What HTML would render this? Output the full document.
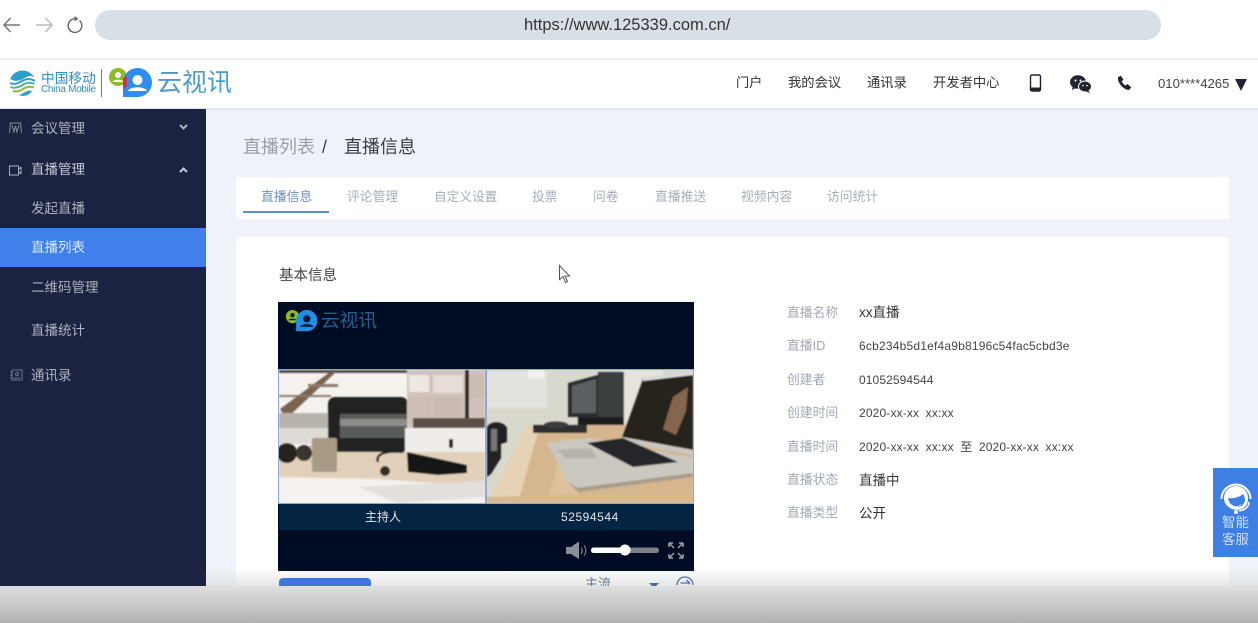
<!DOCTYPE html>
<html lang="zh-CN"><head><meta charset="utf-8"><title>直播信息</title>
<style>
html,body{margin:0;padding:0;width:1258px;height:623px;overflow:hidden;background:#fff}
body{position:relative;font-family:"Liberation Sans","Noto Sans CJK SC",sans-serif;color:#333}
.a{position:absolute;white-space:nowrap;line-height:1}
.b{position:absolute}
svg{position:absolute;overflow:visible}
.side{color:#aeb3c1;font-size:13.5px}
.tab{color:#a9adb6;font-size:12.8px;top:191px}
.lab{color:#a3a7b0;font-size:12.8px;left:787px}
.val{color:#444;font-size:12px;left:859px}
.dt{font-size:12px;letter-spacing:.15px;word-spacing:3px}
.big{font-size:13.5px;color:#333}
</style></head><body>
<!-- browser bar -->
<svg style="left:0;top:0" width="100" height="50" fill="none">
<path d="M20 25H4M10.500 18 4 25l6.500 7" stroke="#777" stroke-width="1.500"/>
<path d="M36 25h16M45.500 18l6.500 7-6.500 7" stroke="#bbb" stroke-width="1.500"/>
<path d="M79.500 20.500a6.800 6.800 0 1 1-4.500-1.700" stroke="#666" stroke-width="1.400"/><path d="M74.500 16v5.500l4-2.800z" fill="#666"/>
</svg>
<div class="b" style="left:95px;top:10px;width:1066px;height:30px;border-radius:15px;background:#d9dfe7"></div>
<div class="a" style="left:524px;top:17px;font-size:16.5px;color:#333">https://www.125339.com.cn/</div>
<div class="b" style="left:0;top:58px;width:1258px;height:2px;background:#eceef1"></div>
<!-- header -->
<div class="b" style="left:0;top:60px;width:1258px;height:48px;background:#fff"></div>
<svg style="left:9px;top:69px" width="28" height="28" viewBox="0 0 28 28" fill="none">
<path d="M13.500 1.500c5 0 9 2.500 12 7-3-2-6-2-9 0-4 2.500-8 4-12 3-2-1-3-1.500-3.500-1 1.500-5 6.500-9 12.500-9z" fill="#2f9ec9"/>
<path d="M1 14c3 1.500 7 1 11-1.500 5-3 10-3 14-.500" stroke="#2f9ec9" stroke-width="2"/>
<path d="M1.500 18c4 1.500 8 .500 12-2 4-2.500 8-3 12-1" stroke="#4fb3a0" stroke-width="2"/>
<path d="M4 22c4 1 7 0 10-2 4-2.500 7-3 11-1.500" stroke="#8fc03e" stroke-width="2.200"/>
<path d="M9 26c3 0 5-2 8-3.500 2-1 4-1 6-.5-2 3-5 5-9.500 5z" fill="#2f9ec9"/>
</svg>
<div class="a" style="left:41px;top:72px;font-size:13.700px;color:#2f8cbc">中国移动</div>
<div class="a" style="left:41px;top:85px;font-size:10px;color:#2f8cbc;letter-spacing:-.3px">China Mobile</div>
<div class="b" style="left:101px;top:69px;width:1px;height:28px;background:#2f8cbc"></div>
<svg style="left:109px;top:68px" width="44" height="30" viewBox="0 0 44 30">
<circle cx="9" cy="9" r="9" fill="#8dbb22"/><circle cx="9" cy="7" r="3" fill="#fff"/><path d="M3.500 14c1-3 10-3 11-0z" fill="#fff"/>
<path d="M14 29V15A14.500 14.500 0 1 1 29 29z" fill="#2d8ef0"/><path d="M14 10l4-2v10l-4 4z" fill="#c9315e"/>
<circle cx="28.500" cy="12" r="5" fill="#fff"/><path d="M19 23c2-5 17-5 19 0z" fill="#fff"/>
</svg>
<div class="a" style="left:157px;top:71px;font-size:25px;color:#4a9ccb">云视讯</div>
<div class="a" style="left:736px;top:76px;font-size:13.200px;color:#333">门户</div>
<div class="a" style="left:788px;top:76px;font-size:13.300px;color:#333">我的会议</div>
<div class="a" style="left:867px;top:76px;font-size:13.300px;color:#333">通讯录</div>
<div class="a" style="left:933px;top:76px;font-size:13.300px;color:#333">开发者中心</div>
<svg style="left:1029px;top:74px" width="13" height="18" viewBox="0 0 13 18" fill="none"><rect x="1.500" y="1" width="10" height="16" rx="1.500" stroke="#222433" stroke-width="1.400"/><rect x="1.500" y="13.500" width="10" height="3.500" fill="#222433"/></svg>
<svg style="left:1070px;top:75px" width="22" height="19" viewBox="0 0 22 19"><ellipse cx="8" cy="7" rx="8" ry="6.800" fill="#222433"/><path d="M3 11l-1 4 4-2z" fill="#222433"/><ellipse cx="15" cy="11.500" rx="6.500" ry="5.500" fill="#222433" stroke="#fff"/><path d="M18 15l2 3-4-1.500z" fill="#222433"/><circle cx="5.500" cy="5.500" r="1" fill="#fff"/><circle cx="10.500" cy="5.500" r="1" fill="#fff"/><circle cx="13" cy="10.500" r=".8" fill="#fff"/><circle cx="17" cy="10.500" r=".8" fill="#fff"/></svg>
<svg style="left:1117px;top:75px" width="15" height="16" viewBox="0 0 15 16"><path d="M1 2.500 3.500 .5l3 4-1.700 2c.7 1.800 2 3.200 3.800 4l1.900-1.500 3.800 3.200-2 2.500C8 16 0 8 1 2.500z" fill="#222433"/></svg>
<div class="a" style="left:1158px;top:77px;font-size:13.100px;color:#444">010****4265</div>
<svg style="left:1235px;top:79px" width="12" height="12"><path d="M0 0h12L6 12z" fill="#222433"/></svg>
<div class="b" style="left:0;top:108px;width:1258px;height:2px;background:#e3e6ee"></div>
<!-- main background -->
<div class="b" style="left:206px;top:110px;width:1052px;height:476px;background:#eff2f8"></div>
<!-- sidebar -->
<div class="b" style="left:0;top:109px;width:206px;height:477px;background:#1b2340"></div>
<div class="b" style="left:0;top:228px;width:206px;height:39px;background:#3f80ea"></div>
<svg style="left:9px;top:122px" width="13" height="12" viewBox="0 0 13 12" fill="none" stroke="#858b9e"><path d="M.500 1h12M1.500 1 .500 11M11.500 1l1 10M3 3 5 10 6.500 4 8 10l2-7"/></svg>
<div class="a side" style="left:31px;top:122px">会议管理</div>
<svg style="left:179px;top:124px" width="9" height="6" fill="none" stroke="#aeb3c1" stroke-width="2"><path d="M1 1l3.500 3.500L8 1"/></svg>
<svg style="left:9px;top:165px" width="14" height="11" fill="none" stroke="#aeb3c1"><rect x=".5" y="1" width="9" height="9"/><path d="M12 2v7M10 4l2-2M10 7l2 2"/></svg>
<div class="a side" style="left:31px;top:163px;color:#c6cad6">直播管理</div>
<svg style="left:179px;top:167px" width="9" height="6" fill="none" stroke="#c6cad6" stroke-width="2"><path d="M1 5l3.500-3.500L8 5"/></svg>
<div class="a side" style="left:31px;top:202px">发起直播</div>
<div class="a side" style="left:31px;top:241px;color:#dfe8fb">直播列表</div>
<div class="a side" style="left:31px;top:281px">二维码管理</div>
<div class="a side" style="left:31px;top:324px">直播统计</div>
<svg style="left:10px;top:369px" width="13" height="12" fill="none" stroke="#6f7587"><rect x="2" y="1" width="10" height="10"/><circle cx="7" cy="5" r="1.500"/><path d="M4 9h6M0 3h3M0 6h3M0 9h3"/></svg>
<div class="a side" style="left:31px;top:369px">通讯录</div>
<!-- breadcrumb -->
<div class="a" style="left:243px;top:138px;font-size:18px;color:#9a9ea8">直播列表</div>
<div class="a" style="left:322px;top:138px;font-size:18px;color:#444">/</div>
<div class="a" style="left:344px;top:138px;font-size:18px;color:#3a3c42">直播信息</div>
<!-- tabs -->
<div class="b" style="left:236px;top:177px;width:993px;height:42px;background:#fff;border-radius:2px"></div>
<div class="a tab" style="left:261px;color:#6c8fc2">直播信息</div>
<div class="a tab" style="left:347px">评论管理</div>
<div class="a tab" style="left:434px;font-size:12.700px">自定义设置</div>
<div class="a tab" style="left:532px">投票</div>
<div class="a tab" style="left:593px">问卷</div>
<div class="a tab" style="left:655px">直播推送</div>
<div class="a tab" style="left:741px">视频内容</div>
<div class="a tab" style="left:827px">访问统计</div>
<div class="b" style="left:243px;top:211px;width:86px;height:2px;background:#5f8bd0"></div>
<!-- card -->
<div class="b" style="left:236px;top:237px;width:993px;height:349px;background:#fff;border-radius:4px 4px 0 0"></div>
<!-- bottom fade over page, beneath video -->
<div class="b" style="left:206px;top:568px;width:1052px;height:18px;background:linear-gradient(rgba(222,222,222,0),rgba(222,222,222,.75))"></div>
<div class="a" style="left:279px;top:269px;font-size:14.500px;color:#444">基本信息</div>
<svg style="left:559px;top:265px" width="13" height="19" viewBox="0 0 13 19"><path d="M.5.5v14l3.500-3 2.500 6 2-1-2.500-5.500h4.500z" fill="#fff" stroke="#555"/></svg>
<!-- video -->
<div class="b" style="left:278px;top:302px;width:416px;height:269px;background:#000b24"></div>
<svg style="left:285px;top:310px" width="34" height="22" viewBox="0 0 44 30">
<circle cx="9" cy="9" r="9" fill="#8dbb22"/><circle cx="9" cy="7" r="3" fill="#14203a"/><path d="M3.500 14c1-3 10-3 11 0z" fill="#14203a"/>
<path d="M14 29V15A14.500 14.500 0 1 1 29 29z" fill="#1f8fe6"/><circle cx="28.500" cy="12" r="5" fill="#0b1b33"/><path d="M19 23c2-5 17-5 19 0z" fill="#0b1b33"/>
</svg>
<div class="a" style="left:321px;top:312px;font-size:18.700px;color:#24608f">云视讯</div>
<svg style="left:278px;top:369px" width="416" height="135" viewBox="0 0 416 135">
<defs><filter id="s"><feGaussianBlur stdDeviation=".7"/></filter><clipPath id="l"><rect x="1" y="1" width="206" height="133"/></clipPath><clipPath id="r"><rect x="209" y="1" width="206" height="133"/></clipPath></defs>
<rect width="416" height="135" fill="#8fa9d4"/>
<g clip-path="url(#l)"><rect x="1" y="1" width="206" height="133" fill="#f5f2ee"/>
<g filter="url(#s)">
<rect x="1" y="1" width="129" height="3" fill="#5c5048"/>
<path d="M2 40 52 3h6L8 50z" fill="#7b6350"/><path d="M30 15h30v3H30zM1 26h52v2H1z" fill="#8a7a6c"/><rect x="1" y="44" width="50" height="15" fill="#b9b3ad"/><rect x="1" y="59" width="50" height="16" fill="#dedad6"/>
<rect x="50" y="28" width="80" height="56" rx="7" fill="#232324"/><rect x="62" y="45" width="68" height="24" fill="#5a5b5b"/><rect x="62" y="50" width="68" height="7" fill="#8d8c8a"/>
<rect x="129" y="1" width="78" height="58" fill="#d0c2ba"/><rect x="131" y="6" width="20" height="17" fill="#efe8e2"/><rect x="155" y="6" width="30" height="18" fill="#e6ddd6"/><rect x="192" y="6" width="15" height="22" fill="#cbbdb4"/><rect x="131" y="28" width="22" height="20" fill="#cdbfb6"/><rect x="155" y="28" width="30" height="20" fill="#cabbb2"/><rect x="187" y="1" width="4" height="52" fill="#2d2724"/><rect x="135" y="49" width="72" height="10" fill="#5c5047"/>
<path d="M127 59h80v34l-80-10z" fill="#efecea"/><rect x="171" y="70" width="4" height="9" rx="1" fill="#222"/>
<path d="M1 83h206v51H1z" fill="#e2d0ba"/><path d="M1 108 100 110 207 118V134H1z" fill="#f5f1ed"/><path d="M80 118 207 112V128L120 134z" fill="#e3dfdb"/>
<rect x="34" y="69" width="25" height="34" rx="2" fill="#a89a85"/><path d="M34 77c-5 1-6 13 0 16" fill="none" stroke="#c9bba4" stroke-width="2"/>
<circle cx="9" cy="84" r="10" fill="#26241f"/><circle cx="26" cy="84" r="8" fill="#3a362f"/>
<path d="M129 83 189 96V104L160 106 130 103z" fill="#131313"/><path d="M100 93c-3-8 8-12 25-10" fill="none" stroke="#222" stroke-width="2.500"/><circle cx="107" cy="102" r="5" fill="#332d2a"/>
</g></g>
<g clip-path="url(#r)"><rect x="209" y="1" width="206" height="133" fill="#d9d8cc"/>
<g filter="url(#s)">
<rect x="209" y="2" width="60" height="37" fill="#e2e3dc"/><rect x="250" y="1" width="16" height="8" fill="#f2f1ec"/><rect x="345" y="1" width="40" height="60" fill="#e6e4d9"/>
<path d="M290 14 320 6V48H290z" fill="#2b2d30"/><path d="M294 17 318 10V44H294z" fill="#5d6064"/><rect x="320" y="3" width="26" height="46" fill="#3d3f41"/><rect x="300" y="48" width="46" height="8" fill="#1f1f1f"/>
<path d="M209 134 249 56H415V134z" fill="#d6b68e"/><path d="M209 134 249 56 262 56 240 134z" fill="#e6d2b4"/><path d="M270 134 285 70H300L300 134z" fill="#dfc29b"/><path d="M209 134V128L415 122V134z" fill="#d9b78f"/>
<rect x="255" y="56" width="54" height="8" fill="#2f2f2f"/><ellipse cx="278" cy="56" rx="12" ry="3.500" fill="#3a3a3a"/>
<path d="M209 58c4-7 17-6 20 1v14l-6 2v14l-10 16-4 3z" fill="#222"/><rect x="213" y="60" width="6" height="22" fill="#777"/>
<path d="M365 9 415 3V81L344 68z" fill="#26201f"/><path d="M385 60 395 28 410 18 408 42 398 66z" fill="#85664e"/><path d="M365 9l50-6v3l-50 6z" fill="#ddd"/><path d="M344 68 415 81v5l-72-13z" fill="#c9c8c0"/>
<path d="M269 74 312 69 415 89V104L299 119c-4 0-7-2-9-6z" fill="#cbc8bf"/><path d="M290 113 299 119 415 104V108L300 123z" fill="#a89d8c"/>
<path d="M309 74 345 69 400 93 355 98z" fill="#27282c"/><path d="M279 81 312 79 320 89 287 89z" fill="#b5b3ac"/>
</g></g>
</svg>
<div class="b" style="left:279px;top:504px;width:415px;height:26px;background:#032443"></div>
<div class="a" style="left:365px;top:511px;font-size:12px;color:#e5e9ee">主持人</div>
<div class="a" style="left:561px;top:511px;font-size:12px;color:#e5e9ee;letter-spacing:.55px">52594544</div>
<svg style="left:566px;top:541px" width="120" height="19" viewBox="0 0 120 19" fill="none">
<path d="M0 6h5l8-5.500V18L5 13H0z" fill="#8a8f97"/><path d="M15 6.500c1.500 2 1.500 4.500 0 6.500M18 4.500c2.500 3 2.500 7 0 10" stroke="#8a8f97"/>
<rect x="25" y="6.500" width="68" height="5.500" rx="2.700" fill="#7c8087"/><rect x="25" y="6.500" width="35" height="5.500" rx="2.700" fill="#fff"/><circle cx="59" cy="9" r="5.500" fill="#fff"/>
<path d="M103 2l5 5M103 2h4M103 2v4M117 2l-5 5M117 2h-4M117 2v4M103 17l5-5M103 17h4M103 17v-4M117 17l-5-5M117 17h-4M117 17v-4" stroke="#a5a9ae" stroke-width="1.400"/>
</svg>
<!-- below video -->
<div class="b" style="left:279px;top:578px;width:92px;height:8px;background:#3f78dc;border-radius:4px 4px 0 0"></div>
<div class="a" style="left:585px;top:577px;font-size:13px;color:#5e7492;height:9px;overflow:hidden">主流</div>
<svg style="left:649px;top:583px" width="10" height="3" viewBox="0 0 10 3"><path d="M0 0h10L7 3H3z" fill="#456a9c"/></svg>
<svg style="left:676px;top:574px" width="18" height="12" viewBox="0 0 18 12" fill="none" stroke="#4a73ad" stroke-width="1.300"><path d="M1 11A8 8 0 0 1 17 11M4.500 9h9M10.500 6l3 3-1 1"/></svg>
<!-- info -->
<div class="a lab" style="top:307px">直播名称</div><div class="a val big" style="top:306px">xx直播</div>
<div class="a lab" style="top:340px">直播ID</div><div class="a val" style="top:340px;letter-spacing:.2px">6cb234b5d1ef4a9b8196c54fac5cbd3e</div>
<div class="a lab" style="top:374px">创建者</div><div class="a val" style="top:374px;letter-spacing:.1px">01052594544</div>
<div class="a lab" style="top:407px">创建时间</div><div class="a val dt" style="top:407px">2020-xx-xx xx:xx</div>
<div class="a lab" style="top:441px">直播时间</div><div class="a val dt" style="top:441px">2020-xx-xx xx:xx 至 2020-xx-xx xx:xx</div>
<div class="a lab" style="top:474px">直播状态</div><div class="a val big" style="top:474px">直播中</div>
<div class="a lab" style="top:507px">直播类型</div><div class="a val big" style="top:507px">公开</div>
<!-- service -->
<div class="b" style="left:1213px;top:468px;width:45px;height:89px;background:#3d7fe3"></div>
<svg style="left:1219px;top:482px" width="34" height="33" viewBox="0 0 34 33">
<path d="M5 16a12 12 0 0 1 24 0c0 6-2 9-6 11-3 1-7 1-10 0-4-2-8-5-8-11z" fill="#fff"/>
<path d="M2.500 17a14.500 14.500 0 0 1 29 0" fill="none" stroke="#fff" stroke-width="2"/><path d="M30 20c0 5-4 8-10 9" fill="none" stroke="#fff" stroke-width="1.500"/><circle cx="17" cy="30" r="2" fill="#fff"/>
<path d="M9 16c5 1 12-1 15-4 2 3 2 5 2 7-2 5-5 6-8 6-4 0-8-3-9-9z" fill="#3d7fe3"/><path d="M12 22c3 3 7 3 10 0-1 4-9 4-10 0z" fill="#fff"/>
</svg>
<div class="a" style="left:1222px;top:516px;font-size:13.500px;color:#cfe0f8">智能</div>
<div class="a" style="left:1222px;top:533px;font-size:13.500px;color:#cfe0f8">客服</div>
<!-- bottom band -->
<div class="b" style="left:0;top:586px;width:1258px;height:37px;background:linear-gradient(#e0e0e0,#b2b2b2)"></div>
</body></html>
